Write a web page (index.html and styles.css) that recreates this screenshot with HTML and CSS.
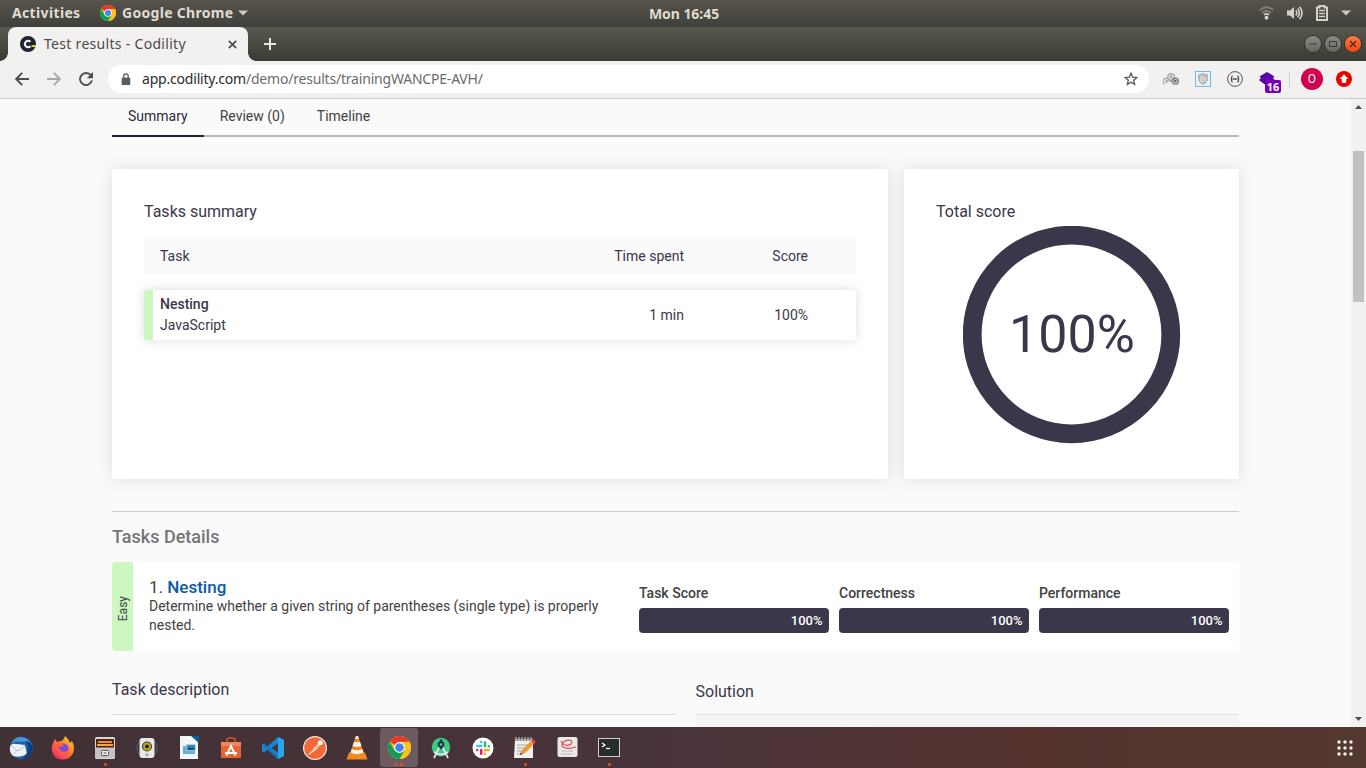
FILE: index.html
```html
<!DOCTYPE html>
<html lang="en">
<head>
<meta charset="utf-8">
<title>Test results - Codility</title>
<link rel="stylesheet" href="styles.css">
</head>
<body>
<svg width="0" height="0" class="defs">
  <defs>
    <symbol id="chrome" viewBox="0 0 24 24">
      <circle cx="12" cy="12" r="12" fill="#fbc116"/>
      <path d="M12 12L1.6 6A12 12 0 0 1 22.4 6Z" fill="#e33b2e"/>
      <path d="M12 6H22.4L17.2 12Z" fill="#e33b2e"/>
      <path d="M22.4 6H12L17.2 15 12 24A12 12 0 0 0 22.4 6Z" fill="#fbc116"/>
      <path d="M1.6 6A12 12 0 0 0 12 24L17.2 15 12 12 6.8 15Z" fill="#109d58"/>
      <circle cx="12" cy="12" r="5.7" fill="#fff"/>
      <circle cx="12" cy="12" r="4.5" fill="#4285f4"/>
    </symbol>
  </defs>
</svg>
<div class="desktop">
  <header class="panel">
    <div class="panel-left">
      <span class="activities">Activities</span>
      <svg class="app-icon" width="16" height="16"><use href="#chrome"/></svg>
      <span class="app-name">Google Chrome</span>
      <svg width="10" height="6" viewBox="0 0 10 6"><path d="M0 0.5H10L5 5.5Z" fill="#ccc9c2"/></svg>
    </div>
    <span class="clock">Mon 16:45</span>
    <div class="panel-right">
      <svg width="15" height="14" viewBox="0 0 15 14" fill="none"><path d="M.7 4.2Q7.5-1.8 14.3 4.2M3 7Q7.5 3 12 7" stroke="#817f78" stroke-width="1.8"/><path d="M5 9Q7.5 6.8 10 9" stroke="#d5d2cb" stroke-width="1.5"/><circle cx="7.5" cy="11.7" r="1.9" fill="#d8d5ce"/></svg>
      <svg width="16" height="14" viewBox="0 0 16 14" fill="none" stroke="#d5d2cb" stroke-width="1.6"><path d="M0 4.5H3L7 1V13L3 9.5H0Z" fill="#d5d2cb" stroke="none"/><path d="M8.8 4.4Q10.8 7 8.8 9.6M10.7 2.6Q14 7 10.7 11.4M12.6.8Q17.4 7 12.6 13.2"/></svg>
      <svg width="12" height="16" viewBox="0 0 12 16" fill="none" stroke="#d5d2cb"><path d="M1 2.5H3.5V1H8.5V2.5H11V15H1Z" stroke-width="2"/><path d="M3 5.5H9M3 8.5H9M3 11.5H9" stroke-width="1.6"/></svg>
      <svg width="10" height="6" viewBox="0 0 10 6"><path d="M0 0.5H10L5 5.5Z" fill="#ccc9c2"/></svg>
    </div>
  </header>

  <div class="tabstrip">
    <div class="browser-tab">
      <svg width="16" height="16" viewBox="0 0 16 16" fill="none"><circle cx="8" cy="8" r="8" fill="#20242f"/><path d="M10.4 5.8A3.2 3.2 0 1 0 10.4 10.2" stroke="#f4f4f4" stroke-width="2.1"/><path d="M11.5 9.2H16L15.7 11H11.5Z" fill="#f3ef16"/></svg>
      <span class="tab-title">Test results - Codility</span>
      <svg width="9" height="9" viewBox="0 0 9 9"><path d="M.8.8L8.2 8.2M8.2.8L.8 8.2" stroke="#4d4d4d" stroke-width="1.7"/></svg>
    </div>
    <svg class="new-tab" width="12" height="12" viewBox="0 0 12 12"><path d="M6 0V12M0 6H12" stroke="#e7e6e1" stroke-width="2"/></svg>
    <div class="window-buttons">
      <span class="win"><svg width="8" height="8" viewBox="0 0 8 8"><path d="M0 4H8" stroke="#3a3a35"/></svg></span>
      <span class="win"><svg width="8" height="8" viewBox="0 0 8 8"><path d="M.5 1.5H7.5V6.5H.5Z" fill="none" stroke="#3a3a35"/></svg></span>
      <span class="win win-close"><svg width="8" height="8" viewBox="0 0 8 8"><path d="M1 1L7 7M7 1L1 7" stroke="#5d2309" stroke-width="1.2"/></svg></span>
    </div>
  </div>

  <div class="toolbar">
    <svg width="14" height="14" viewBox="0 0 14 14" fill="none" stroke="#4d4d4d" stroke-width="1.9"><path d="M14 7H1.5M7.2 .9L1.2 7L7.2 13.1"/></svg>
    <svg width="14" height="14" viewBox="0 0 14 14" fill="none" stroke="#aaa9a7" stroke-width="1.9"><path d="M0 7H12.5M6.8 .9L12.8 7L6.8 13.1"/></svg>
    <svg width="14" height="14" viewBox="0 0 14 14" fill="none"><path d="M11.8 3.4A6 6 0 1 0 12.9 8.4" stroke="#4d4d4d" stroke-width="1.9"/><path d="M14 0V6.2H7.8Z" fill="#4d4d4d"/></svg>
    <div class="address">
      <svg width="10" height="12" viewBox="0 0 10 12"><path d="M1 5H9V12H1Z" fill="#5c5c5c" stroke="#5c5c5c" stroke-width=".6"/><path d="M2.8 5V3A2.2 2.2 0 0 1 7.2 3V5" fill="none" stroke="#5c5c5c" stroke-width="1.3"/></svg>
      <span class="url"><b>app.codility.com</b>/demo/results/trainingWANCPE-AVH/</span>
      <svg width="14" height="14" viewBox="0 0 14 14"><path d="M7 1.3L8.7 5.1L12.9 5.5L9.7 8.3L10.6 12.4L7 10.2L3.4 12.4L4.3 8.3L1.1 5.5L5.3 5.1Z" fill="none" stroke="#5c5c5c" stroke-width="1.4"/></svg>
    </div>
    <div class="extensions">
      <svg width="16" height="12" viewBox="0 0 16 12" fill="none" stroke="#aaa" stroke-width="1.4"><path d="M2 11A3 3 0 1 1 6.2 8.5"/><circle cx="8" cy="4" r="3.3"/><circle cx="12.4" cy="8.2" r="2.9" stroke="#777"/><circle cx="3.7" cy="8.5" r=".7" fill="#999"/><circle cx="8" cy="4" r="1"/><circle cx="12.4" cy="8.2" r=".7" stroke="#666"/><path d="M6 6.8L10 10.2"/></svg>
      <svg width="16" height="16" viewBox="0 0 16 16" fill="none"><rect x=".5" y=".5" width="15" height="15" fill="#eef2f5" stroke="#64bff0"/><path d="M8 2L13 3.4V8Q12.5 12 8 14Q3.5 12 3 8V3.4Z" fill="#b7b7b7"/><path d="M8.2 5.5H6V10.5H8.2M7.5 8H11M9.5 5.5V7M9.5 9V10.5" stroke="#eee"/></svg>
      <svg width="16" height="16" viewBox="0 0 16 16" fill="none" stroke="#555"><circle cx="8" cy="8" r="7.4"/><path d="M5.3 4.5Q3.3 8 5.3 11.5M10.7 4.5Q12.7 8 10.7 11.5" stroke-width="1.2"/><path d="M5.5 8H10.5" stroke-width="1.5"/></svg>
      <span class="badge-icon"><svg width="16" height="14" viewBox="0 0 16 14"><path d="M0 8L8 3L16 8L8 14Z" fill="#32006f"/><path d="M8 0L15.5 4.6L14 6L15.5 8L8 12L.5 8L2 6L.5 4.6Z" fill="#5c00ae"/></svg><span class="count">16</span></span>
      <span class="divider"></span>
      <span class="avatar">O</span>
      <svg width="16" height="16" viewBox="0 0 16 16"><circle cx="8" cy="8" r="8" fill="#eb0000"/><path d="M8 3.3L12.4 8H10.2V12H5.8V8H3.6Z" fill="#fff"/></svg>
    </div>
  </div>

  <div class="viewport">
    <main class="page">
      <nav class="tabs"><span class="tab active">Summary</span><span class="tab">Review (0)</span><span class="tab">Timeline</span></nav>
      <div class="cards">
        <section class="card">
          <h2>Tasks summary</h2>
          <div class="row head"><span class="c-task">Task</span><span class="c-time">Time spent</span><span class="c-score">Score</span></div>
          <div class="row item"><span class="c-task"><b>Nesting</b>JavaScript</span><span class="c-time">1 min</span><span class="c-score">100%</span></div>
        </section>
        <section class="card score-card">
          <h2>Total score</h2>
          <svg class="ring" width="218" height="218" viewBox="0 0 218 218"><circle cx="108.5" cy="108.5" r="99.3" fill="none" stroke="#3b374a" stroke-width="18.8"/><text x="109" y="126" text-anchor="middle">100%</text></svg>
        </section>
      </div>
      <h3 class="details-title">Tasks Details</h3>
      <section class="detail">
        <div class="level"><span>Easy</span></div>
        <div class="detail-text">
          <div class="detail-name">1. <b>Nesting</b></div>
          <p>Determine whether a given string of parentheses (single type) is properly nested.</p>
        </div>
        <div class="meters">
          <div class="meter"><span>Task Score</span><div class="bar">100%</div></div>
          <div class="meter"><span>Correctness</span><div class="bar">100%</div></div>
          <div class="meter"><span>Performance</span><div class="bar">100%</div></div>
        </div>
      </section>
      <div class="columns">
        <div class="description">Task description</div>
        <div class="solution"><div class="solution-title">Solution</div><div class="solution-body"></div></div>
      </div>
    </main>
    <div class="scrollbar">
      <svg width="7" height="4" viewBox="0 0 7 4"><path d="M0 4L3.5 0L7 4Z" fill="#505050"/></svg>
      <div class="thumb"></div>
      <svg class="down" width="7" height="4" viewBox="0 0 7 4"><path d="M0 0L3.5 4L7 0Z" fill="#505050"/></svg>
    </div>
  </div>

  <footer class="dock">
    <span class="launcher"><svg width="24" height="24" viewBox="0 0 24 24"><circle cx="12.5" cy="12" r="11.3" fill="#1c5eaa"/><path d="M2 8Q6-1 15 1.5Q22 4 23 12Q18 4 10 6Q7 4 2 8Z" fill="#4596dc"/><path d="M1 11Q2 7 8 8L16 9L18 18Q12 22 4 20Q0 16 1 11Z" fill="#eef1f7"/><path d="M2 10L9 15L16 10M4 19L8 14" fill="none" stroke="#b9c3d4"/><path d="M16 5Q24 13 13 23Q22 23 23.5 13Q23 5 16 5Z" fill="#123a7e"/></svg></span>
    <span class="launcher"><svg width="24" height="24" viewBox="0 0 24 24"><defs><linearGradient id="ff" x1="1" y1="0" x2=".2" y2="1"><stop offset="0" stop-color="#ffe32f"/><stop offset=".5" stop-color="#ff7b26"/><stop offset="1" stop-color="#f2246c"/></linearGradient></defs><path d="M14 0Q18 3 19 7L21 5Q25 13 21 19Q17 24 11 23.5Q4 23 1.5 17Q-.5 11 3 5L4 3L6 6L10 5Q13 4 14 0Z" fill="url(#ff)"/><circle cx="12.5" cy="12.5" r="5" fill="#8049d9"/><path d="M5 8Q10 6 13 9L10 11Q7 10 8 13Q13 19 18 13Q17 20 11 20Q5 18 5 8Z" fill="#ff5a4c"/></svg></span>
    <span class="launcher"><svg width="20" height="22" viewBox="0 0 20 22"><rect width="20" height="22" rx="1.5" fill="#dad8d4"/><path d="M1 2H19V11H1Z" fill="#4b2413"/><path d="M3 4H17V6H3Z" fill="#f28b35"/><path d="M2 7H18V9H2Z" fill="#f5a24c"/><path d="M0 10.5H20V21H0Z" fill="#c4c2be"/><rect x="6.5" y="13.5" width="7" height="5" rx="1" fill="#f2f2f2" stroke="#555"/><path d="M8.5 16H11.5" stroke="#444"/></svg><i class="dots"><i></i></i></span>
    <span class="launcher"><svg width="22" height="22" viewBox="0 0 22 22" fill="none"><path d="M3 5Q-1 11 3 17M19 5Q23 11 19 17" stroke="#4c5470" stroke-width="1.3"/><rect x="3.5" y="1" width="15" height="20" rx="3" fill="#e9e8e5"/><circle cx="11" cy="9.5" r="5" fill="#3d3b30"/><circle cx="11" cy="9.5" r="3.9" fill="#c4a928"/><circle cx="11" cy="9.5" r="1.9" fill="#222"/><circle cx="11" cy="17.8" r="1.6" fill="#aaa"/></svg></span>
    <span class="launcher"><svg width="20" height="24" viewBox="0 0 20 24"><path d="M1 0H13L19 6V23H1Z" fill="#f3f6f8"/><path d="M12 0H20V7Z" fill="#0c5f91"/><rect x="4" y="10" width="12" height="8" fill="#69afd2"/><rect x="7.5" y="8.5" width="9" height="6" fill="#3489b7" stroke="#b8dced" stroke-width=".7"/><path d="M8 14L11 11L13 12.5L14 11.5L16 14Z" fill="#174f70"/></svg></span>
    <span class="launcher"><svg width="20" height="22" viewBox="0 0 20 22"><path d="M6 6V2Q10-.5 14 2V6" fill="none" stroke="#c54d27" stroke-width="1.8"/><path d="M0 5H20V21H0Z" fill="#e66432"/><path d="M0 5H20V9H0Z" fill="#ee875c"/><path d="M5.5 18.5L10 9L14.5 18.5M4 16H16" fill="none" stroke="#fff" stroke-width="1.9"/></svg></span>
    <span class="launcher"><svg width="22" height="22" viewBox="0 0 22 22"><path d="M16 0L22 3V19L16 22L5.5 12.8L2 15.5L0 14.4V7.6L2 6.5L5.5 9.2Z" fill="#1489d4"/><path d="M16 6.2L9.5 11L16 15.8Z" fill="#46333a"/><path d="M16 0L22 3V19L16 22Z" fill="#2ba5ee"/><path d="M2 6.5L16 18V22L0 7.6Z" fill="#1277bb"/></svg></span>
    <span class="launcher"><svg width="24" height="24" viewBox="0 0 24 24"><circle cx="12" cy="12" r="11.4" fill="#f16936" stroke="#ffe9dd" stroke-width="1.2"/><path d="M5 19L12 10.5L14.5 12.5L8 17.5Z" fill="#fff1e8"/><path d="M12 10.5L16 7L17.5 8.8L14.5 12.5Z" fill="#ffc3a4"/><circle cx="17.3" cy="6.7" r="2.5" fill="#fff"/><path d="M6 17L14 11" stroke="#e58a65"/></svg></span>
    <span class="launcher"><svg width="22" height="24" viewBox="0 0 22 24"><path d="M3 16.5H19L21.5 23.5H.5Z" fill="#f28a1a"/><path d="M9.5 1H12.5L18 18Q11 22 4 18Z" fill="#f38716"/><path d="M8 6H14L15.5 10Q11 12 6.5 10ZM5.7 13Q11 15.5 16.3 13L17.5 16.5Q11 20 4.5 16.5Z" fill="#f3f2ef"/><path d="M9.8 0H12.2L13 3H9Z" fill="#e8e6df"/></svg></span>
    <span class="launcher current"><svg width="23" height="23"><use href="#chrome"/></svg><i class="dots"><i></i><i></i></i></span>
    <span class="launcher"><svg width="22" height="24" viewBox="0 0 22 24"><circle cx="11" cy="11" r="9.2" fill="#3bcc80"/><path d="M10 10L4 22M12 10L18 22M4 16Q11 21 18 16" fill="none" stroke="#dfe7ed" stroke-width="1.8"/><path d="M11 3.5V13" stroke="#16364c" stroke-width="2.5"/><circle cx="11" cy="8.5" r="3.3" fill="#16364c"/><circle cx="11" cy="8.5" r="1.3" fill="#5bcb98"/></svg></span>
    <span class="launcher"><svg width="22" height="22" viewBox="0 0 22 22"><circle cx="11" cy="11" r="10.5" fill="#fff"/><g fill="none" stroke-width="2.5" stroke-linecap="round"><path d="M9.2 5V5.1M5.4 9H9.2" stroke="#36c5f0"/><path d="M13 5.4V9.2M16.8 9.2V9.3" stroke="#2eb67d"/><path d="M13 13H16.8M13 16.8V16.9" stroke="#ecb22e"/><path d="M9.2 13V16.8M5.2 13V13.1" stroke="#e01e5a"/></g></svg></span>
    <span class="launcher"><svg width="24" height="22" viewBox="0 0 24 22"><path d="M2 2H20V21H1Z" fill="#efefeb"/><path d="M2 2H20V4H2Z" fill="#8e8e84"/><path d="M3 0V4M6 0V4M9 0V4M12 0V4M15 0V4M18 0V4" stroke="#ddd"/><path d="M4 8H15M4 11H12M4 14H10M4 17H8" stroke="#a5a5a0"/><path d="M7 18L9 13L18 4L21 7L12 16Z" fill="#ed9833"/><path d="M18 4L20 2L23 5L21 7Z" fill="#db4141"/><path d="M7 18L7.8 15.5L9.5 17Z" fill="#443229"/></svg><i class="dots"><i></i></i></span>
    <span class="launcher"><svg width="21" height="22" viewBox="0 0 21 22"><rect x=".5" y="0" width="20" height="20" rx="2" fill="#e9e9e7"/><path d="M4 14H16M4 17H16" stroke="#bbb"/><path d="M4 4Q8 11 14 7Q17 3 11 3Q5 4 5 9Q8 13 19 10" fill="none" stroke="#df4548" stroke-width="1.2"/></svg></span>
    <span class="launcher"><svg width="22" height="19" viewBox="0 0 22 19"><rect x=".5" y=".5" width="21" height="18" fill="#282b2c" stroke="#cfcfcc"/><path d="M4 5L7 7L4 9" fill="none" stroke="#fff" stroke-width="1.3"/><path d="M8 10.5H12" stroke="#fff" stroke-width="1.3"/></svg><i class="dots"><i></i></i></span>
    <svg class="grid-button" width="16" height="16" viewBox="0 0 16 16" fill="#f6f1ef"><circle cx="2" cy="2" r="1.7"/><circle cx="8" cy="2" r="1.7"/><circle cx="14" cy="2" r="1.7"/><circle cx="2" cy="8" r="1.7"/><circle cx="8" cy="8" r="1.7"/><circle cx="14" cy="8" r="1.7"/><circle cx="2" cy="14" r="1.7"/><circle cx="8" cy="14" r="1.7"/><circle cx="14" cy="14" r="1.7"/></svg>
  </footer>
</div>
</body>
</html>
```
FILE: styles.css
```css
* { box-sizing: border-box; }
body { margin: 0; overflow: hidden; font-family: Roboto, sans-serif; font-size: 14px; color: #3b374a; }
svg { display: block; flex: none; }
.defs { position: absolute; }
.desktop { width: 1366px; height: 768px; display: flex; flex-direction: column; }

.panel { height: 27px; display: grid; grid-template-columns: 1fr auto 1fr; align-items: center; background: linear-gradient(#57544d, #403f39); color: #dfdbd2; font: bold 14px/25px "Noto Sans", sans-serif; }
.panel > *, .activities, .app-name { margin-top: -1px; }
.panel-left { display: flex; align-items: center; padding-left: 12px; }
.activities { width: 88px; letter-spacing: .35px; }
.app-icon { margin-right: 6px; }
.app-name { width: 116px; letter-spacing: .3px; }
.clock { padding-left: 2px; letter-spacing: -.05px; }
.panel-right { display: flex; align-items: center; justify-content: flex-end; gap: 13px; padding-right: 15px; }

.tabstrip { height: 34px; display: flex; align-items: center; padding-left: 8px; background: linear-gradient(#58584e, #3b3b35); }
.browser-tab { position: relative; width: 240px; height: 34px; display: flex; align-items: center; padding: 0 11px 0 12px; border-radius: 8px 8px 0 0; background: #f2f1ef; font: 14px "Noto Sans", sans-serif; color: #4b4b4b; }
.browser-tab::before, .browser-tab::after { content: ""; position: absolute; bottom: 0; width: 8px; height: 8px; }
.browser-tab::before { left: -8px; background: radial-gradient(circle at 0 0, transparent 7.5px, #f2f1ef 8px); }
.browser-tab::after { right: -8px; background: radial-gradient(circle at 100% 0, transparent 7.5px, #f2f1ef 8px); }
.tab-title { flex: 1; margin: -2px 0 0 8px; letter-spacing: .3px; white-space: nowrap; }
.new-tab { margin-left: 16px; }
.window-buttons { margin-left: auto; display: flex; gap: 4px; padding-right: 5px; }
.win { width: 16px; height: 16px; border-radius: 50%; display: flex; align-items: center; justify-content: center; background: linear-gradient(#8b8a83, #66655f); box-shadow: 0 0 0 1px #33332e; }
.win-close { background: linear-gradient(#ff7a4e, #ec4a0b); }

.toolbar { height: 38px; display: flex; align-items: center; padding: 0 14px 2px 15px; gap: 18px; background: #f2f1ef; border-bottom: 1px solid #cbcac9; }
.address { flex: none; width: 1041px; height: 28px; margin-left: -3px; border-radius: 14px; background: #fff; display: flex; align-items: center; padding: 0 11px 0 13px; }
.url { flex: 1; margin-left: 11px; font: 14px "Noto Sans", sans-serif; letter-spacing: -.2px; color: #6b6b6b; white-space: nowrap; }
.url b { font-weight: normal; color: #2b2b2b; }
.extensions { flex: 1; display: flex; align-items: center; gap: 16px; margin-left: -4px; }
.badge-icon { position: relative; }
.count { position: absolute; left: 6px; top: 8px; width: 16px; height: 13px; border-radius: 2px; background: #7a00b8; color: #fff; font: bold 11px/13px "Noto Sans", sans-serif; text-align: center; }
.divider { width: 1px; height: 16px; margin: 0 -5px 0 -2px; background: #cfcecd; }
.avatar { flex: none; width: 22px; height: 22px; border-radius: 50%; background: #d2004e; color: #fff; text-align: center; font-size: 12px; line-height: 22px; margin-right: -3px; }

.viewport { height: 628px; overflow: hidden; display: flex; background: #fafafa; }
.page { flex: 1; padding: 0 112px; }
.tabs { height: 38px; display: flex; border-bottom: 2px solid #bababa; color: #424242; }
.tab { height: 38px; padding: 0 16px; line-height: 35px; }
.tab.active { border-bottom: 2px solid #20242f; color: #2d2b3a; }
.cards { display: flex; gap: 16px; margin-top: 32px; }
.card { width: 776px; height: 310px; padding: 32px; border-radius: 2px; background: #fff; box-shadow: 0 0 16px rgba(0,0,0,.12); }
.score-card { width: 335px; }
h2 { margin: 0; font-size: 16px; font-weight: 400; line-height: 21px; }
.row { display: flex; align-items: center; padding: 0 48px 0 16px; line-height: 21px; }
.head { height: 35px; margin: 17px 0 16px; background: #fafafa; border-radius: 2px; }
.item { height: 50px; padding-left: 7px; border-left: 9px solid #ccf8bf; border-radius: 3px; box-shadow: 0 0 12px rgba(35,35,60,.16); }
.c-task { flex: 1; }
.c-task b { display: block; font-weight: 500; }
.c-time { width: 124px; text-align: right; }
.c-score { width: 124px; text-align: right; }
.ring { margin: 4px 0 0 27px; fill: #3b374a; font-size: 52px; }
.details-title { margin: 32px 0 0; height: 51px; border-top: 1px solid #ccc; font-size: 18px; font-weight: 500; line-height: 49px; color: #757575; }
.detail { height: 89px; display: flex; background: #fff; border-radius: 4px; overflow: hidden; color: #424242; }
.level { width: 21px; background: #ccf8bf; display: flex; align-items: center; justify-content: center; font-size: 12px; padding-top: 5px; }
.level span { writing-mode: vertical-rl; transform: rotate(180deg); }
.detail-text { width: 506px; padding: 16px 30px 0 16px; }
.detail-name { font-size: 17px; line-height: 19px; }
.detail-name b { font-weight: 500; color: #0b5ca6; }
.detail-text p { margin: 0; line-height: 19px; }
.meters { display: flex; gap: 10px; padding-top: 21px; }
.meter { width: 190px; font-weight: 500; line-height: 20px; }
.bar { height: 25px; margin-top: 5px; padding-right: 6.5px; border-radius: 4px; background: #3b374a; color: #fff; text-align: right; font-size: 13px; line-height: 25px; }
.columns { display: flex; gap: 19.5px; font-size: 16px; }
.description { width: 564px; height: 64px; line-height: 77px; border-bottom: 1px solid #ddd; }
.solution { flex: 1; }
.solution-title { height: 63px; line-height: 81px; }
.solution-body { height: 14px; border-top: 1px solid #ddd; background: #f4f4f4; }
.scrollbar { width: 15px; background: #f1f1f1; display: flex; flex-direction: column; align-items: center; padding: 6px 0; }
.thumb { width: 11px; height: 151px; margin-top: 42px; background: #c1c1c1; }
.down { margin-top: auto; }

.dock { height: 41px; display: flex; align-items: center; background: linear-gradient(90deg, #403135, #49333a 48%, #54332f 75%, #543832); }
.launcher { position: relative; width: 42px; height: 39px; display: flex; align-items: center; justify-content: center; }
.current { width: 38px; margin: 0 2px; border-radius: 3px; background: #6b5a60; }
.dots { position: absolute; left: 0; right: 0; bottom: 1px; display: flex; gap: 2px; justify-content: center; }
.dots i { width: 3px; height: 3px; border-radius: 50%; background: #e95420; }
.grid-button { margin: 0 13px 0 auto; }
```
